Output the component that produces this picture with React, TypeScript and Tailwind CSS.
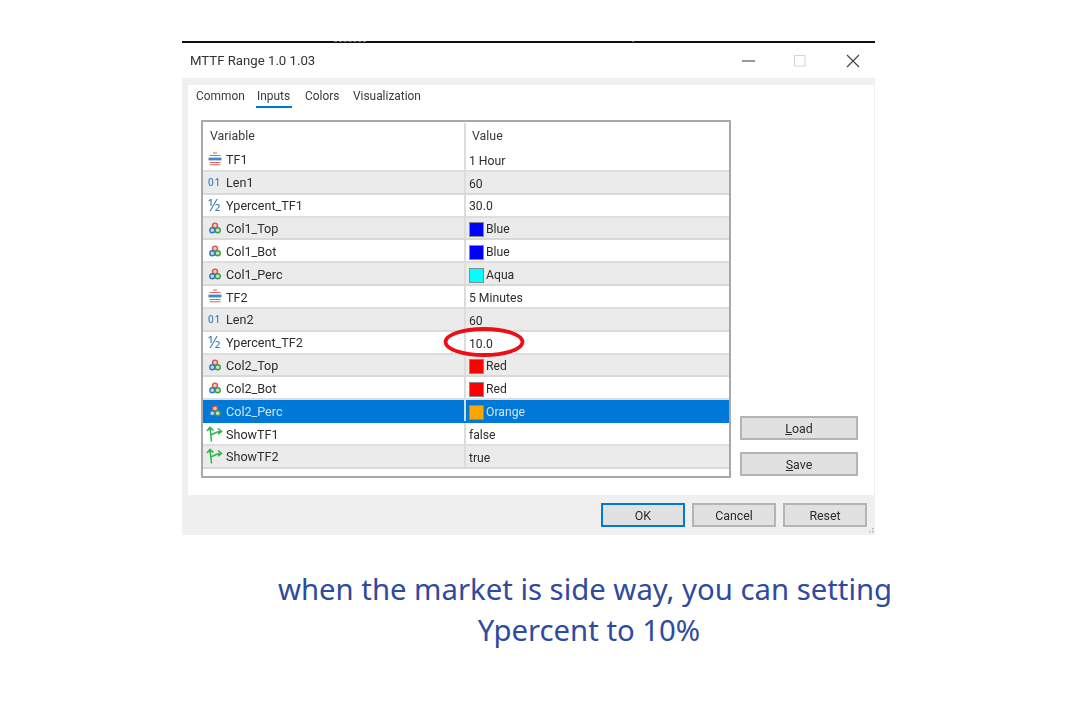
import React from "react";

type Kind = "tf" | "int" | "dbl" | "col" | "bool";
type Row = { name: string; kind: Kind; value: string; swatch?: string; selected?: boolean };

const rows: Row[] = [
  { name: "TF1", kind: "tf", value: "1 Hour" },
  { name: "Len1", kind: "int", value: "60" },
  { name: "Ypercent_TF1", kind: "dbl", value: "30.0" },
  { name: "Col1_Top", kind: "col", value: "Blue", swatch: "#0000ff" },
  { name: "Col1_Bot", kind: "col", value: "Blue", swatch: "#0000ff" },
  { name: "Col1_Perc", kind: "col", value: "Aqua", swatch: "#00ffff" },
  { name: "TF2", kind: "tf", value: "5 Minutes" },
  { name: "Len2", kind: "int", value: "60" },
  { name: "Ypercent_TF2", kind: "dbl", value: "10.0" },
  { name: "Col2_Top", kind: "col", value: "Red", swatch: "#ff0000" },
  { name: "Col2_Bot", kind: "col", value: "Red", swatch: "#ff0000" },
  { name: "Col2_Perc", kind: "col", value: "Orange", swatch: "#ffa500", selected: true },
  { name: "ShowTF1", kind: "bool", value: "false" },
  { name: "ShowTF2", kind: "bool", value: "true" },
];

function RowIcon({ kind }: { kind: Kind }) {
  if (kind === "tf")
    return (
      <svg width="14" height="14" viewBox="0 0 14 14" className="-mt-[3px] shrink-0">
        <path d="M5 1h4M1.5 3.5h11M1.5 10.5h11M1.5 12.8h11" stroke="#e4605a" strokeWidth="1.1" />
        <path d="M0.5 7h13" stroke="#3c88cc" strokeWidth="2.8" />
      </svg>
    );
  if (kind === "int")
    return (
      <span className="-mt-[3px] w-[14px] shrink-0 font-['Noto_Sans',sans-serif] text-[10px] leading-[14px] font-medium tracking-[0.8px] text-[#3a7cb4]">01</span>
    );
  if (kind === "dbl")
    return <span className="-mt-[4px] w-[14px] shrink-0 font-['Noto_Sans',sans-serif] text-[16px] leading-[14px] text-[#3a7cb4]">½</span>;
  if (kind === "col")
    return (
      <svg width="14" height="14" viewBox="0 0 14 14" className="-mt-[3px] shrink-0">
        <circle cx="7" cy="4.6" r="2.5" fill="#f6c8c2" stroke="#d8534a" strokeWidth="1.4" />
        <circle cx="4.3" cy="9.2" r="2.5" fill="#bcd8f0" stroke="#3278b8" strokeWidth="1.4" />
        <circle cx="9.7" cy="9.2" r="2.5" fill="#c4e8c4" stroke="#3f9a45" strokeWidth="1.4" />
      </svg>
    );
  return (
    <svg width="17" height="16" viewBox="0 0 17 16" className="-mt-[3px] -mr-[1px] -ml-[2px] shrink-0">
      <path
        d="M5.5 15.5 L4 2 M1 5 L4 1.5 L7.5 4.5 M4.8 9 C7 8.5 10 5.5 14.5 5.5 M12 2.5 L15.5 5.5 L12 8"
        fill="none"
        stroke="#35b552"
        strokeWidth="1.6"
      />
    </svg>
  );
}

function Btn({ label, w, primary }: { label: React.ReactNode; w: string; primary?: boolean }) {
  return (
    <div
      className={`${w} flex h-[24px] items-center justify-center border-2 bg-[#e1e1e1] pt-[2px] text-[12.4px] text-[#2b2b2b] ${
        primary ? "border-[#0078d7]" : "border-[#b4b4b4]"
      }`}
    >
      {label}
    </div>
  );
}

export default function App() {
  return (
    <div className="min-h-[720px] w-[1080px] bg-white font-['Noto_Sans',sans-serif]">
      <div className="pt-[41px] pl-[182px]">
        <div className="w-[693px] font-['Roboto',sans-serif] text-[#2d2d2d] blur-[0.35px]">
          <div className="flex h-[2px] bg-[#111111]">
            <div className="ml-[152px] h-[1px] w-[32px] border-t border-dashed border-[#22b535]" />
            <div className="ml-[266px] h-[1px] w-[2px] bg-[#a8642a]" />
          </div>
          <div className="flex h-[35px] items-center bg-white pl-[8px] text-[13.2px]">
            <span className="flex-1 pt-[1px] text-[#333333]">MTTF Range 1.0 1.03</span>
            <svg width="126" height="16" viewBox="0 0 126 16" className="mr-[7px]">
              <path d="M0 8h13" stroke="#555555" strokeWidth="1.2" />
              <rect x="52.5" y="2.5" width="10.5" height="10.5" fill="none" stroke="#d4d4d4" />
              <path d="M105 2l12 12M117 2l-12 12" stroke="#444444" strokeWidth="1.2" />
            </svg>
          </div>
          <div className="relative h-[457px] bg-[#f0f0f0] pt-[7px]">
            <div className="ml-[6px] flex h-[410px] w-[686px] flex-col bg-white">
              <div className="flex h-[35px] items-start pt-[3px] pl-[8px] text-[11.9px] text-[#3a3a3a]">
                <span className="w-[60px] leading-[17px]">Common</span>
                <div className="w-[49px]">
                  <div className="w-[36px] border-b-2 border-[#0078d7] pb-[1px] pl-[1px] leading-[17px]">Inputs</div>
                </div>
                <span className="w-[48px] leading-[17px]">Colors</span>
                <span className="leading-[17px]">Visualization</span>
              </div>
              <div className="flex">
                <div className="relative ml-[13px] h-[358px] w-[530px] border-2 border-[#a8a8a8] bg-white">
                  <div className="flex h-[27px] items-center pt-[1px] text-[12.4px]">
                    <div className="w-[261px] pl-[7px] text-[#3a3a3a]">Variable</div>
                    <div className="h-full w-[2px] bg-[#dcdcdc]" />
                    <div className="pl-[6px] text-[#3a3a3a]">Value</div>
                  </div>
                  {rows.map((r, i) => (
                    <div
                      key={r.name}
                      className={`flex h-[22.85px] items-center border-b-2 ${
                        r.selected
                          ? "border-[#0078d7] bg-[#0078d7] text-[#cfe4f8]"
                          : i % 2 === 1
                            ? "border-[#d9d9d9] bg-[#ebebeb]"
                            : "border-[#dedede] bg-white"
                      }`}
                    >
                      <div className="flex w-[261px] items-center gap-[4px] pt-[3px] pl-[5px] text-[12.6px]">
                        <RowIcon kind={r.kind} />
                        <span>{r.name}</span>
                      </div>
                      <div className={`h-full w-[2px] ${r.selected ? "bg-[#cfe2f5]" : "bg-[#dcdcdc]"}`} />
                      <div className="flex items-center gap-[2px] pt-[3px] pl-[3px] text-[12.2px]">
                        {r.swatch && (
                          <div
                            className="h-[15px] w-[15px] border border-[#8a8a8a]"
                            style={{ backgroundColor: r.swatch }}
                          />
                        )}
                        <span>{r.value}</span>
                      </div>
                    </div>
                  ))}
                  <svg
                    width="84"
                    height="32"
                    viewBox="0 0 84 32"
                    className="absolute top-[204px] left-[239px]"
                  >
                    <ellipse cx="42" cy="16" rx="38.5" ry="13" fill="none" stroke="#ec0f17" strokeWidth="3.8" />
                  </svg>
                </div>
                <div className="ml-[9px] flex h-[356px] w-[118px] flex-col justify-end gap-[12px]">
                  <Btn w="w-[118px]" label={<span><span className="underline">L</span>oad</span>} />
                  <Btn w="w-[118px]" label={<span><span className="underline">S</span>ave</span>} />
                </div>
              </div>
            </div>
            <div className="flex justify-end gap-[7px] pt-[8px] pr-[8px]">
              <Btn w="w-[84px]" label="OK" primary />
              <Btn w="w-[84px]" label="Cancel" />
              <Btn w="w-[84px]" label="Reset" />
            </div>
            <svg width="6" height="6" viewBox="0 0 6 6" className="absolute right-[1px] bottom-[1px]">
              <path d="M4 0h1.5v1.5H4zM1 3h1.5v1.5H1zM4 3h1.5v1.5H4z" fill="#b0b0b0" />
            </svg>
          </div>
        </div>
      </div>
      <div className="mt-[34px] pl-[98px] text-center text-[29.3px] leading-[41px] text-[#2f4a9e]">
        <div className="pr-[8px]">when the market is side way, you can setting</div>
        <div>Ypercent to 10%</div>
      </div>
    </div>
  );
}
